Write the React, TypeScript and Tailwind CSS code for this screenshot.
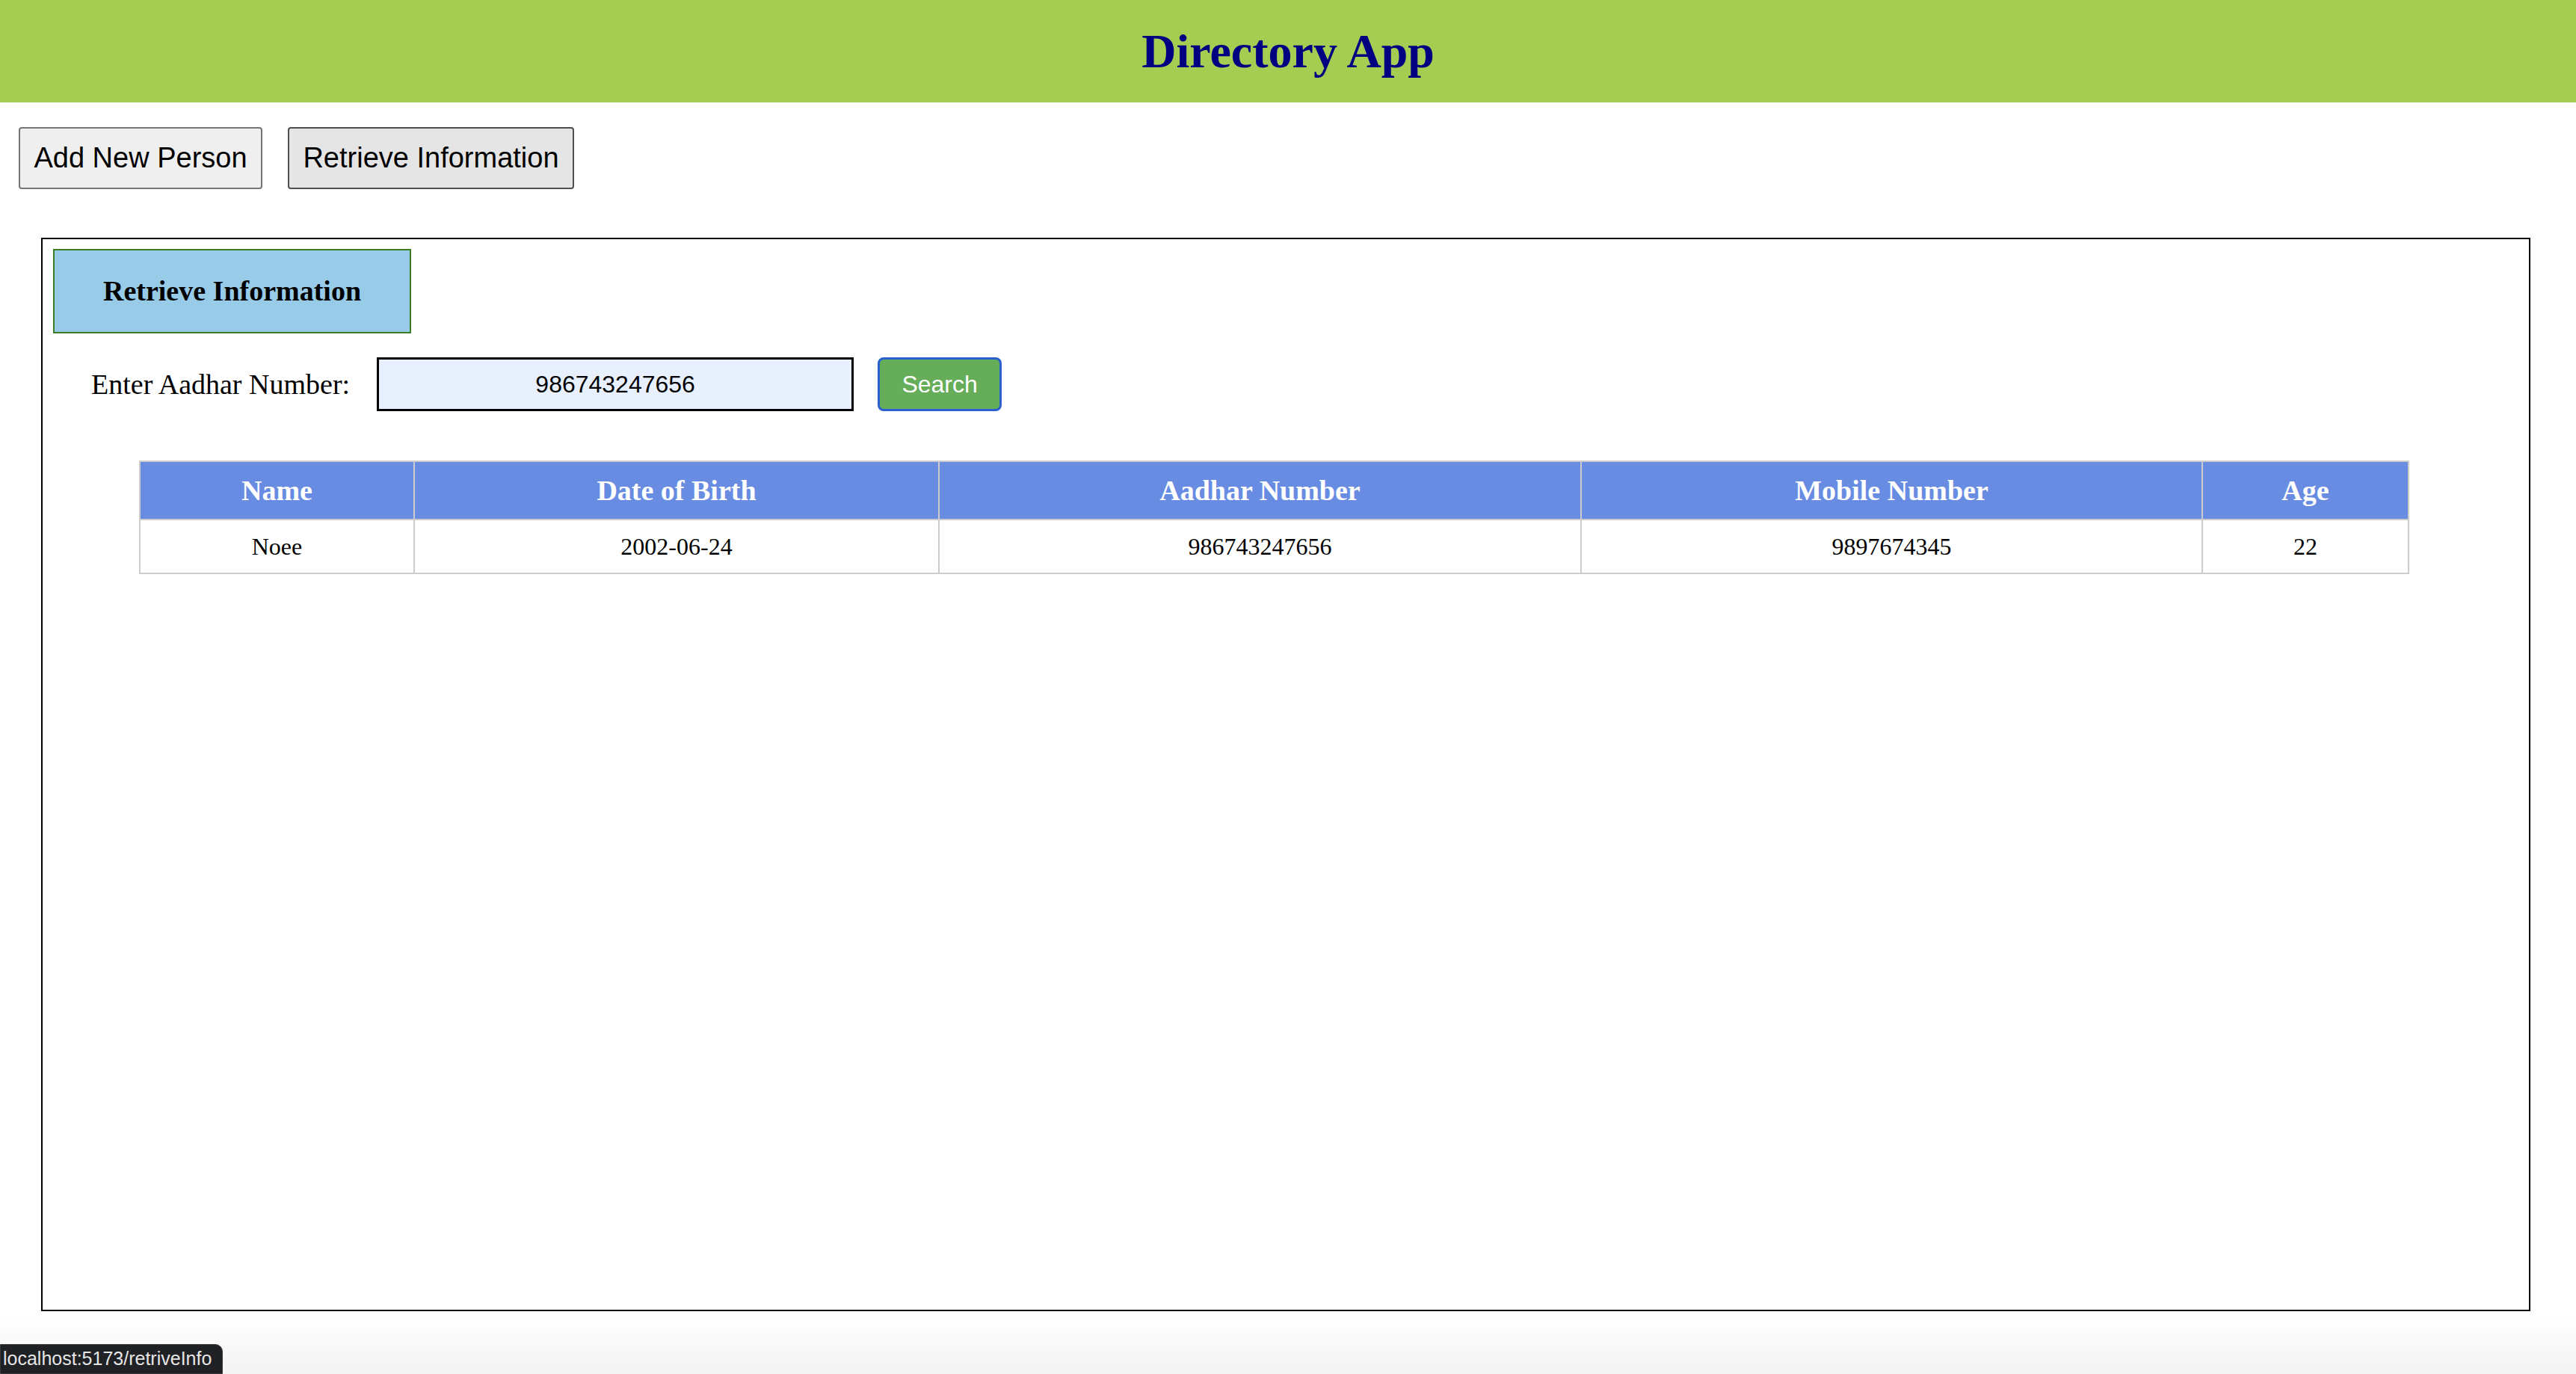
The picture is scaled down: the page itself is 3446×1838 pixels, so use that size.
import React, { useState } from "react";

type Person = {
  name: string;
  dob: string;
  aadhar: string;
  mobile: string;
  age: number;
};

const people: Person[] = [
  {
    name: "Noee",
    dob: "2002-06-24",
    aadhar: "986743247656",
    mobile: "9897674345",
    age: 22,
  },
];

const serif = "font-['Liberation_Serif','Times_New_Roman',serif]";
const sans = "font-['Liberation_Sans',Arial,sans-serif]";

export default function App() {
  const [aadhar, setAadhar] = useState("986743247656");

  return (
    <div className={`relative min-h-screen bg-white ${sans}`}>
      {/* header */}
      <header className="flex h-[137px] items-center justify-center bg-[#a6cd51]">
        <h1 className={`${serif} text-[64px] font-bold leading-none text-[#000080]`}>
          Directory App
        </h1>
      </header>

      {/* nav buttons */}
      <nav className="mt-[33px] flex gap-[34px] pl-[25px]">
        <button className="h-[83px] w-[326px] rounded-[4px] border-2 border-[#767676] bg-[#efefef] text-[38px] text-black">
          Add New Person
        </button>
        <button className="h-[83px] w-[383px] rounded-[4px] border-2 border-[#4f4f4f] bg-[#e5e5e5] text-[38px] text-black">
          Retrieve Information
        </button>
      </nav>

      {/* main panel */}
      <main className="ml-[55px] mt-[65px] h-[1436px] w-[3330px] border-2 border-black">
        <div className="ml-[14px] mt-[13px] flex h-[113px] w-[479px] items-center justify-center border-2 border-[#3a7d22] bg-[#97cbe8]">
          <h3 className={`${serif} text-[38px] font-bold text-black`}>
            Retrieve Information
          </h3>
        </div>

        <div className="mt-[32px] flex h-[72px] items-center pl-[65px]">
          <label className={`${serif} text-[38px] text-black`}>
            Enter Aadhar Number:
          </label>
          <input
            value={aadhar}
            onChange={(e) => setAadhar(e.target.value)}
            className="ml-[36px] h-[72px] w-[638px] border-[3px] border-black bg-[#e8f0fe] text-center text-[32px] text-black outline-none"
          />
          <button className="ml-[32px] h-[72px] w-[166px] rounded-[8px] border-[3px] border-[#2a5fd0] bg-[#66ad5a] text-[32px] text-white">
            Search
          </button>
        </div>

        {/* results */}
        <table
          className={`${serif} ml-[129px] mt-[66px] w-[3035px] table-fixed border-collapse border-2 border-[#cccccc] text-center`}
        >
          <colgroup>
            <col className="w-[367px]" />
            <col className="w-[702px]" />
            <col className="w-[859px]" />
            <col className="w-[831px]" />
            <col className="w-[276px]" />
          </colgroup>
          <thead>
            <tr className="h-[78px] bg-[#698ce3] text-[38px] font-bold text-white">
              <th className="border-2 border-[#cccccc] border-t-0">Name</th>
              <th className="border-2 border-[#cccccc] border-t-0">Date of Birth</th>
              <th className="border-2 border-[#cccccc] border-t-0">Aadhar Number</th>
              <th className="border-2 border-[#cccccc] border-t-0">Mobile Number</th>
              <th className="border-2 border-[#cccccc] border-t-0">Age</th>
            </tr>
          </thead>
          <tbody>
            {people.map((p) => (
              <tr key={p.aadhar} className="h-[72px] bg-white text-[32px] text-black">
                <td className="border-2 border-[#cccccc]">{p.name}</td>
                <td className="border-2 border-[#cccccc]">{p.dob}</td>
                <td className="border-2 border-[#cccccc]">{p.aadhar}</td>
                <td className="border-2 border-[#cccccc]">{p.mobile}</td>
                <td className="border-2 border-[#cccccc]">{p.age}</td>
              </tr>
            ))}
          </tbody>
        </table>
      </main>

      {/* browser status bar */}
      <div className="pointer-events-none absolute bottom-0 left-0 h-[80px] w-full bg-gradient-to-b from-transparent to-[#f3f3f3]" />
      <div className="absolute bottom-0 left-0 flex h-[40px] items-center rounded-tr-[10px] border border-[#3a3a3a] bg-[#202124] pl-[3px] pr-[14px] text-[25px] text-[#e6e6e6]">
        localhost:5173/retriveInfo
      </div>
    </div>
  );
}
